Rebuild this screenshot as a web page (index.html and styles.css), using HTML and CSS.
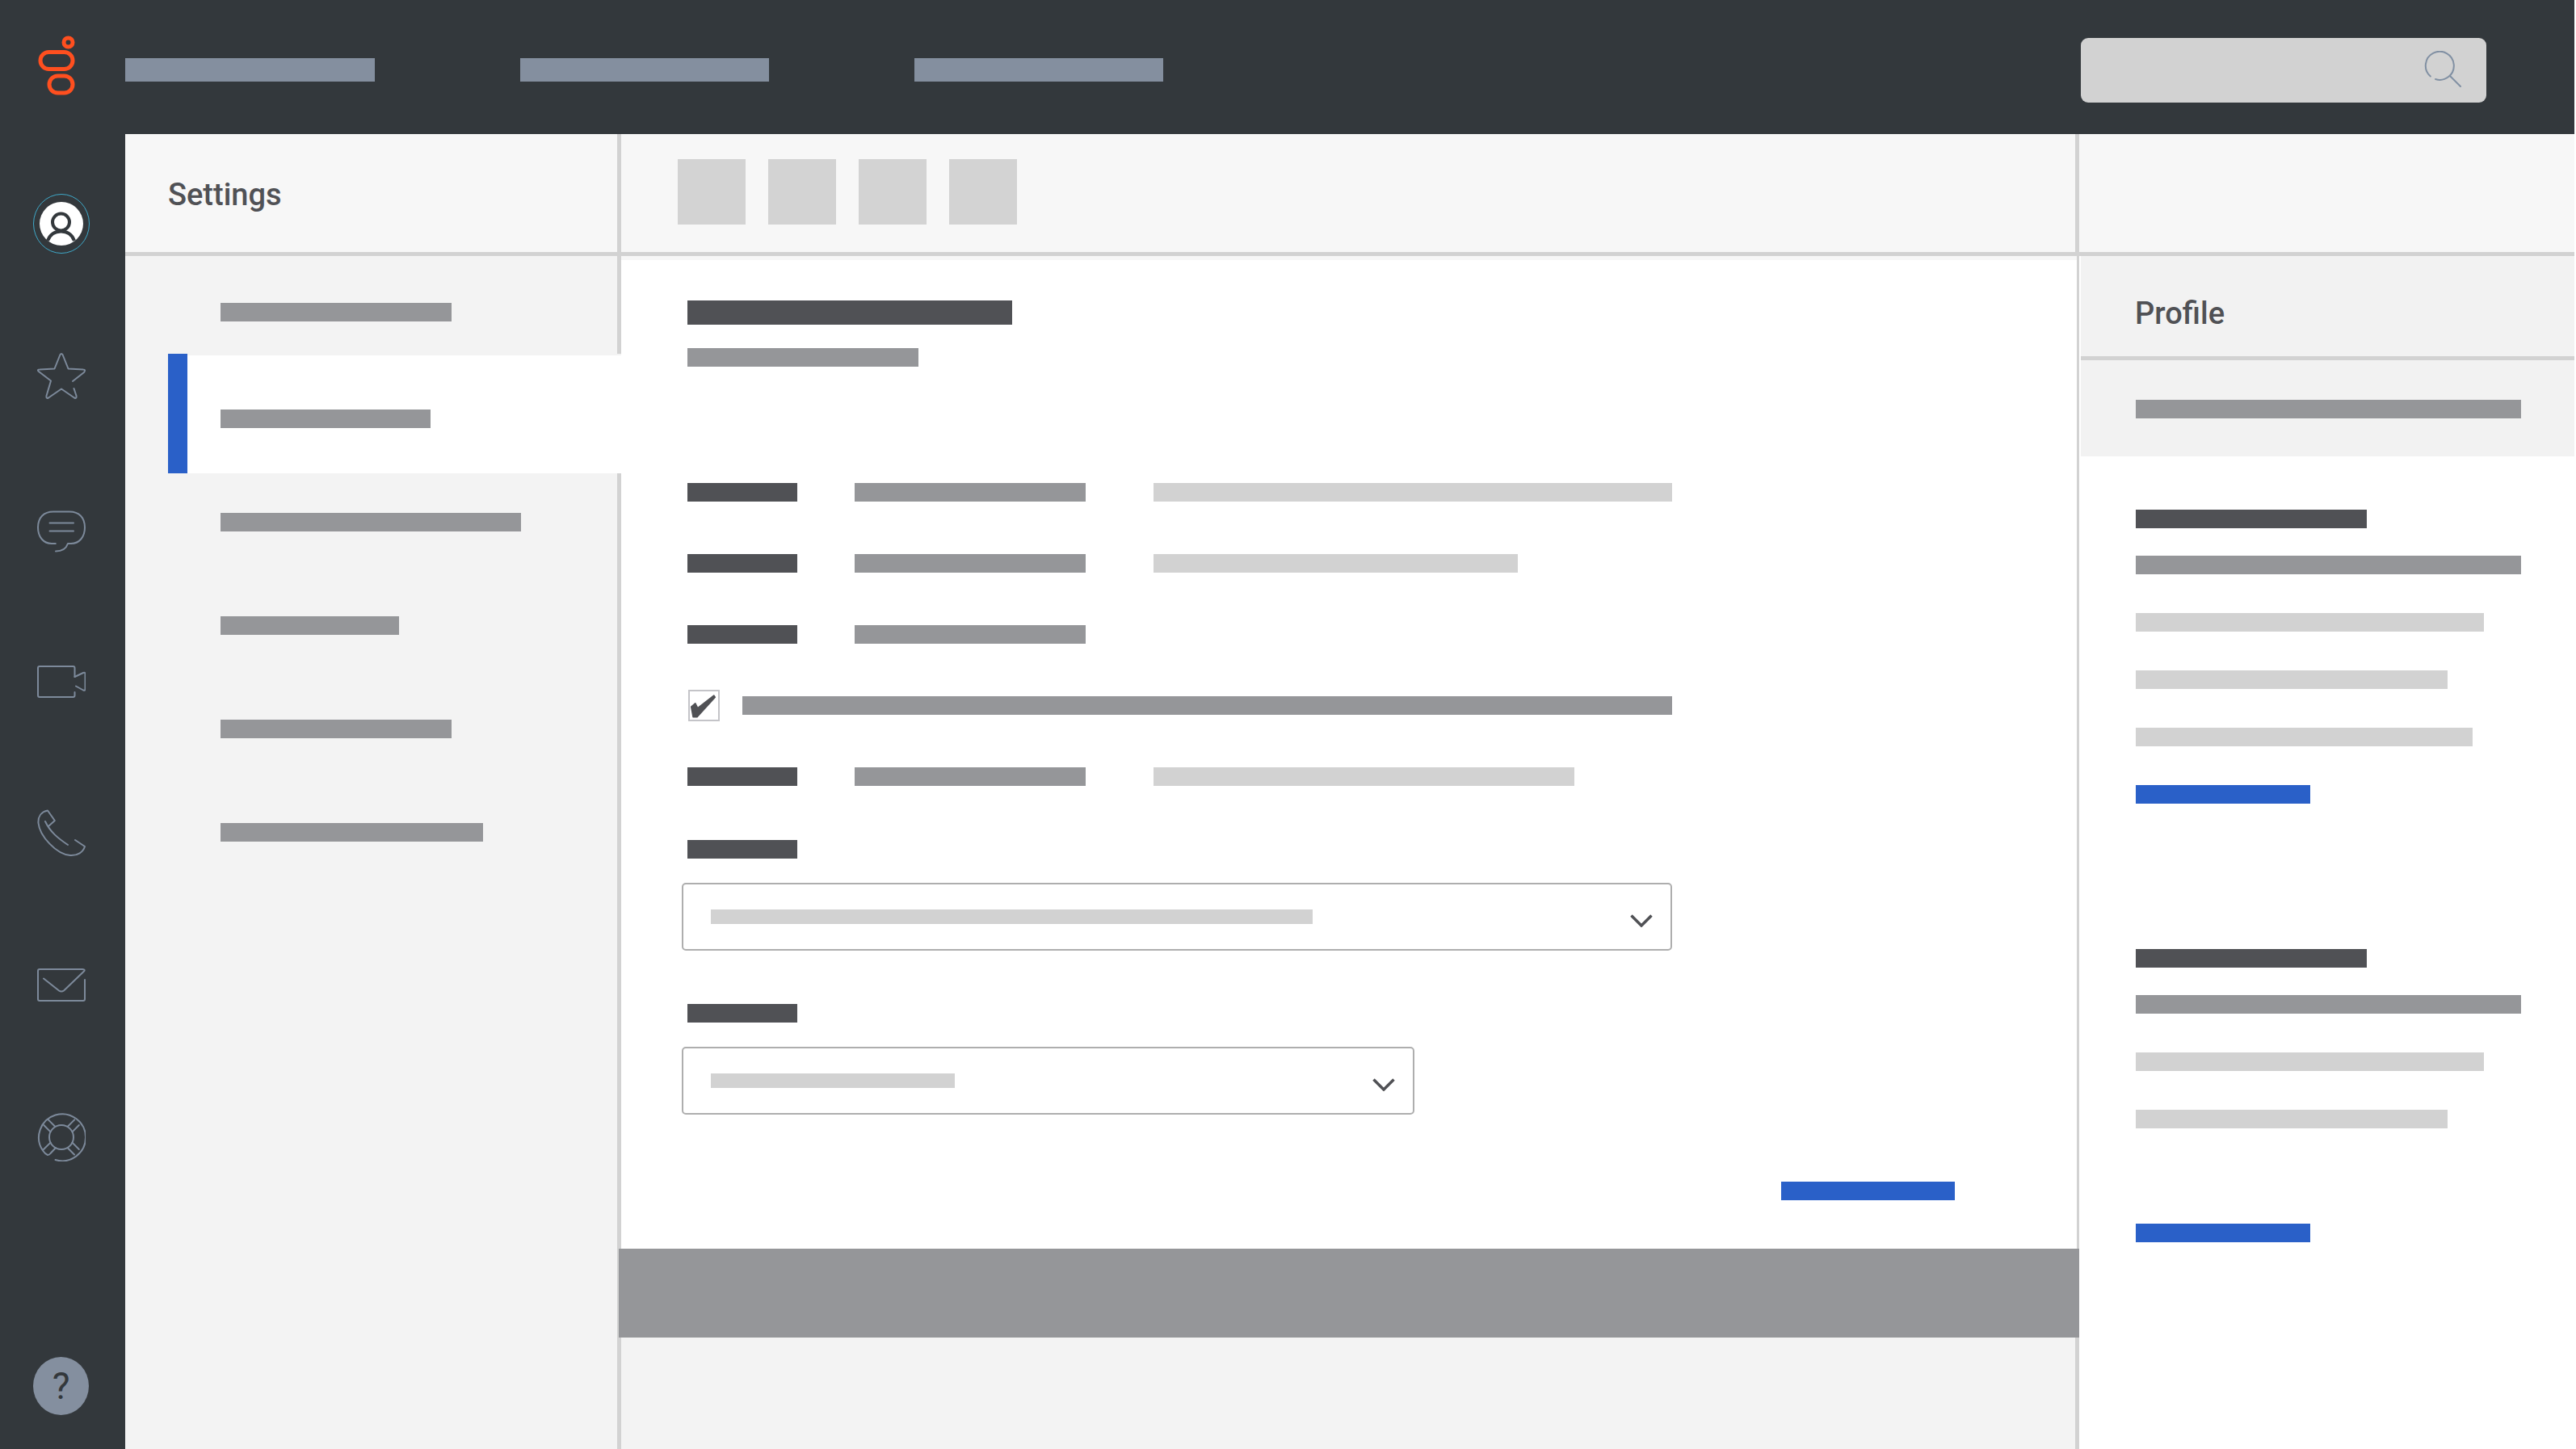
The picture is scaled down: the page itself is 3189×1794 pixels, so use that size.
FILE: index.html
```html
<!DOCTYPE html>
<html lang="en">
<head>
  <meta charset="UTF-8">
  <title>Settings - Profile</title>
  <link rel="stylesheet" href="styles.css">
</head>
<body>

<div class="app">

  <header class="topbar">
    <div class="logo">
      <svg width="46" height="74" viewBox="0 0 46 74" fill="none" stroke="#ff4f1f" stroke-width="5">
        <circle cx="37.5" cy="8.5" r="5.5"/>
        <rect x="3" y="20.5" width="40" height="21" rx="10.5"/>
        <rect x="14" y="50" width="29" height="21" rx="10.5"/>
      </svg>
    </div>
    <nav class="topnav">
      <div class="topnav-item"></div>
      <div class="topnav-item"></div>
      <div class="topnav-item"></div>
    </nav>
    <div class="search">
      <svg width="46" height="45" viewBox="0 0 46 45" fill="none" stroke="#8190a3" stroke-width="2" stroke-linecap="round">
        <path d="M14 35 A17.5 17.5 0 1 0 7.8 31.5"/>
        <path d="M32.5 31.5 L45 44"/>
      </svg>
    </div>
  </header>

  <div class="shell">

    <aside class="rail">
      <div class="rail-item">
        <svg width="70" height="74" viewBox="0 0 70 74">
          <ellipse cx="35" cy="37" rx="34.5" ry="36.5" fill="none" stroke="#3fa9c9" stroke-width="1"/>
          <ellipse cx="35" cy="37" rx="27" ry="27" fill="#fff"/>
          <circle cx="34.5" cy="35" r="10.5" fill="none" stroke="#33383c" stroke-width="4"/>
          <path d="M18 58 C21 50 27 46.5 34.5 46.5 C42 46.5 48 50 51 58" fill="none" stroke="#33383c" stroke-width="4"/>
        </svg>
      </div>
      <div class="rail-item">
        <svg class="rail-icon" width="60" height="60" viewBox="0 0 60 60">
          <path d="M44 36 L58 25 Q60.5 21.5 57 21.5 L38.5 20.5 L31.5 3 Q30 0.8 28.5 3 L21.5 20.5 L3 21.5 Q-0.5 21.5 2 24 L17 35.5 L11.5 54 Q11 58 14 56.5 L30 45.5 L46 56.5 Q49 58 48.5 54 L45.5 45"/>
        </svg>
      </div>
      <div class="rail-item">
        <svg class="rail-icon" width="60" height="60" viewBox="0 0 60 60">
          <path d="M22.8 49 H18 C8 49 1 41 1 29 C1 17 8 9.5 20 9.5 H40 C52 9.5 59 17 59 29 C59 41 52 49 42 49 H38 C36 55 31 58.5 23 58.5"/>
          <path d="M15.5 23.5 H45 M15.5 33.5 H45"/>
        </svg>
      </div>
      <div class="rail-item">
        <svg class="rail-icon" width="60" height="60" viewBox="0 0 60 60">
          <path d="M46.5 25 V14 Q46.5 12 44.5 12 H3 Q1 12 1 14 V48 Q1 50 3 50 H44.5 Q46.5 50 46.5 48 V44"/>
          <path d="M46.5 25 L57 20 Q59.5 19 59.5 21.5 V40 Q59.5 42.5 57 41.5 L48 36.5"/>
        </svg>
      </div>
      <div class="rail-item">
        <svg class="rail-icon" width="60" height="60" viewBox="0 0 60 60">
          <path d="M38 45 C26 37 16 29 10 16"/>
          <path d="M14 22 L21.8 15 L13 2.5 C5 4 1 10 1.5 18 C3 34 24 57 41 58 C50 58.5 57 54 59 47 L47 39"/>
        </svg>
      </div>
      <div class="rail-item">
        <svg class="rail-icon" width="60" height="60" viewBox="0 0 60 60">
          <path d="M59 23 V47 Q59 49 57 49 H3 Q1 49 1 47 V12 Q1 10 3 10 H56 Q60.5 10.5 57.5 13 L33 36.5 Q30 38.5 27 36.5 L8 21.5"/>
        </svg>
      </div>
      <div class="rail-item">
        <svg class="rail-icon" width="60" height="60" viewBox="0 0 60 60">
          <path d="M22.500 58 A29 29 0 1 0 7 46.500 Q10 51 13 52 Q15 52 16.500 50 L23 43"/>
          <circle cx="30" cy="30" r="15"/>
          <path d="M37.800 16.800 L46.200 8.400 M43.500 23.400 L51.800 15 M22.200 16.800 L13.800 8.400 M16.500 23.400 L8.200 15 M43.500 36.600 L51.800 45 M37.800 43.200 L46 51.500 M16.500 36.600 L7.500 45.500"/>
        </svg>
      </div>
      <div class="help">?</div>
    </aside>

    <div class="workspace">

      <div class="toolbar">
        <div class="settings-head"><h2>Settings</h2></div>
        <div class="tools">
          <div class="tool"></div>
          <div class="tool"></div>
          <div class="tool"></div>
          <div class="tool"></div>
        </div>
        <div class="toolbar-end"></div>
      </div>

      <div class="columns">

        <div class="side">
          <div class="nav-item"><div class="bar mid w286"></div></div>
          <div class="nav-item active"><div class="bar mid w260"></div></div>
          <div class="nav-item"><div class="bar mid w372"></div></div>
          <div class="nav-item"><div class="bar mid w221"></div></div>
          <div class="nav-item"><div class="bar mid w286"></div></div>
          <div class="nav-item"><div class="bar mid w325"></div></div>
        </div>

        <main class="main">
          <div class="form">
            <div class="bar dark form-title"></div>
            <div class="bar mid w286 form-sub"></div>

            <div class="rows">
              <div class="row">
                <div class="bar dark label"></div>
                <div class="bar mid value"></div>
                <div class="bar light w642"></div>
              </div>
              <div class="row">
                <div class="bar dark label"></div>
                <div class="bar mid value"></div>
                <div class="bar light w451"></div>
              </div>
              <div class="row">
                <div class="bar dark label"></div>
                <div class="bar mid value"></div>
              </div>
              <div class="row check-row">
                <div class="checkbox">
                  <svg width="36" height="36" viewBox="0 0 36 36">
                    <path d="M2.7 19 L7.7 14.7 L10.7 20.7 L30.7 5 L32.3 7.3 L10 31.7 L5 31.7 Z" fill="#505155" stroke="#505155" stroke-width="1.5" stroke-linejoin="round"/>
                  </svg>
                </div>
                <div class="bar mid check-text"></div>
              </div>
              <div class="row">
                <div class="bar dark label"></div>
                <div class="bar mid value"></div>
                <div class="bar light w521"></div>
              </div>
            </div>

            <div class="field">
              <div class="bar dark label"></div>
              <div class="select select-wide">
                <div class="bar light w745"></div>
                <svg class="chevron" width="28" height="16" viewBox="0 0 28 16"><path d="M1.5 1.5 L14 14 L26.500 1.500"/></svg>
              </div>
            </div>

            <div class="field field-next">
              <div class="bar dark label"></div>
              <div class="select select-narrow">
                <div class="bar light w302"></div>
                <svg class="chevron" width="28" height="16" viewBox="0 0 28 16"><path d="M1.5 1.5 L14 14 L26.500 1.500"/></svg>
              </div>
            </div>

            <div class="bar blue form-link"></div>
          </div>
          <div class="band"></div>
          <div class="main-foot"></div>
        </main>

        <aside class="profile">
          <div class="profile-head"><h2>Profile</h2></div>
          <div class="profile-strip"><div class="bar mid w477"></div></div>

          <section class="profile-section">
            <div class="profile-title">
              <div class="bar dark w286"></div>
              <div class="bar mid w477"></div>
            </div>
            <div class="bar light w431"></div>
            <div class="bar light w386"></div>
            <div class="bar light w417"></div>
            <div class="bar blue w216"></div>
          </section>

          <section class="profile-section second">
            <div class="profile-title">
              <div class="bar dark w286"></div>
              <div class="bar mid w477"></div>
            </div>
            <div class="bar light w431"></div>
            <div class="bar light w386"></div>
            <div class="bar blue w216 profile-link"></div>
          </section>
        </aside>

      </div>
    </div>
  </div>
</div>

</body>
</html>
```
FILE: styles.css
```css
* {
  box-sizing: border-box;
}

html,
body {
  margin: 0;
  background: #fff;
}

body {
  font-family: Roboto, "Liberation Sans", sans-serif;
  overflow: hidden;
}

h2 {
  margin: 0;
  font-size: 38px;
  font-weight: 500;
  color: #505155;
}

.app {
  width: 3187px;
  height: 1794px;
  display: flex;
  flex-direction: column;
}

/* top bar */

.topbar {
  height: 166px;
  flex: none;
  display: flex;
  background: #33383c;
}

.logo {
  width: 155px;
  padding: 44px 0 0 47px;
}

.topnav {
  display: flex;
  gap: 180px;
  padding-top: 72px;
}

.topnav-item {
  width: 308px;
  height: 29px;
  background: #848f9f;
}

.topnav-item:first-child {
  width: 309px;
}

.search {
  width: 502px;
  height: 80px;
  margin: 47px 109px 0 auto;
  padding: 16px 31px 0 0;
  display: flex;
  justify-content: flex-end;
  align-items: flex-start;
  background: #d2d2d2;
  border-radius: 9px;
}

/* icon rail */

.shell {
  flex: 1;
  display: flex;
  min-height: 0;
}

.rail {
  width: 155px;
  flex: none;
  display: flex;
  flex-direction: column;
  align-items: center;
  padding: 17px 4px 0 0;
  background: #33383c;
}

.rail-item {
  height: 188.5px;
  flex: none;
  display: flex;
  align-items: center;
  justify-content: center;
}

.rail-icon {
  fill: none;
  stroke: #7d8a9b;
  stroke-width: 2;
  stroke-linecap: round;
  stroke-linejoin: round;
}

.help {
  width: 69px;
  height: 72px;
  margin: auto 0 42px;
  display: flex;
  align-items: center;
  justify-content: center;
  border-radius: 50%;
  background: #848f9f;
  color: #33383c;
  font-size: 46px;
  font-weight: 400;
}

/* toolbar row */

.workspace {
  flex: 1;
  display: flex;
  flex-direction: column;
  min-width: 0;
}

.toolbar {
  height: 151px;
  flex: none;
  display: flex;
  background: #f7f7f7;
  border-bottom: 5px solid #d2d2d2;
}

.settings-head {
  width: 614px;
  padding: 3px 0 0 53px;
  display: flex;
  align-items: center;
  border-right: 5px solid #d2d2d2;
}

.tools {
  width: 1800px;
  padding: 31px 0 0 70px;
  display: flex;
  gap: 28px;
}

.tool {
  width: 84px;
  height: 81px;
  background: #d3d3d3;
}

.toolbar-end {
  flex: 1;
  border-left: 5px solid #d2d2d2;
}

/* columns */

.columns {
  flex: 1;
  display: flex;
  min-height: 0;
}

.bar {
  height: 23px;
  flex: none;
}

.dark {
  background: #505155;
}

.mid {
  background: #959699;
}

.light {
  background: #d2d2d2;
}

.blue {
  background: #2a60c8;
}

.w216 { width: 216px; }
.w221 { width: 221px; }
.w260 { width: 260px; }
.w286 { width: 286px; }
.w302 { width: 302px; }
.w325 { width: 325px; }
.w372 { width: 372px; }
.w386 { width: 386px; }
.w417 { width: 417px; }
.w431 { width: 431px; }
.w451 { width: 451px; }
.w477 { width: 477px; }
.w521 { width: 521px; }
.w642 { width: 642px; }
.w745 { width: 745px; }

/* settings list */

.side {
  width: 614px;
  flex: none;
  padding: 58px 0 0 53px;
  background: #f3f3f3;
  border-right: 5px solid #d2d2d2;
}

.nav-item {
  margin-top: 105px;
  padding-left: 65px;
}

.nav-item:first-child {
  margin-top: 0;
}

.nav-item.active {
  height: 148px;
  margin: 40px -5px 0 0;
  padding: 69px 0 0 41px;
  border-left: 24px solid #2a60c8;
  background: linear-gradient(#f3f3f3 2px, #fff 2px);
}

.nav-item.active + .nav-item {
  margin-top: 49px;
}

/* main form */

.main {
  width: 1802px;
  flex: none;
  display: flex;
  flex-direction: column;
}

.form {
  height: 1229px;
  flex: none;
  padding: 50px 0 0 82px;
  background: #fff;
  border-top: 5px solid #f7f7f7;
}

.form-title {
  width: 402px;
  height: 30px;
}

.form-sub {
  margin-top: 29px;
}

.rows {
  margin-top: 144px;
  display: flex;
  flex-direction: column;
  gap: 65px;
}

.row {
  height: 23px;
  display: flex;
  align-items: center;
}

.label {
  width: 136px;
}

.value {
  width: 286px;
  margin: 0 84px 0 71px;
}

.checkbox {
  width: 39px;
  height: 39px;
  flex: none;
  background: #fff;
  border: 2px solid #c4c4c8;
  margin-right: 28px;
  margin-left: 1px;
}

.checkbox svg {
  display: block;
  margin: 0 0 0 -1px;
}

.check-text {
  width: 1151px;
}

.field {
  margin-top: 67px;
}

.field-next {
  margin-top: 66px;
}

.select {
  height: 84px;
  margin: 30px 0 0 -7px;
  padding: 0 22px 0 34px;
  display: flex;
  align-items: center;
  justify-content: space-between;
  background: #fff;
  border: 2px solid #aeaeae;
  border-radius: 5px;
}

.select .bar {
  height: 18px;
}

.select-wide {
  width: 1226px;
}

.select-narrow {
  width: 907px;
}

.chevron {
  margin-top: 9px;
  fill: none;
  stroke: #505155;
  stroke-width: 3.5;
}

.form-link {
  width: 215px;
  margin: 83px 0 0 1354px;
}

/* the band sits over both column dividers */
.band {
  position: relative;
  height: 110px;
  flex: none;
  margin: 0 -3px 0 -3px;
  background: #959699;
}

.main-foot {
  flex: 1;
  background: #f3f3f3;
  border-right: 2px solid #d2d2d2;
}

/* profile panel */

.profile {
  flex: 1;
  border-left: 3px solid #d2d2d2;
}

.profile-head {
  height: 129px;
  margin-left: 2px;
  padding: 17px 0 0 67px;
  display: flex;
  align-items: center;
  background: #f2f2f2;
  border-bottom: 5px solid #d2d2d2;
}

.profile-strip {
  height: 119px;
  margin-left: 2px;
  padding: 49px 0 0 68px;
  background: #f2f2f2;
}

.profile-section {
  padding: 66px 0 0 70px;
  display: flex;
  flex-direction: column;
  gap: 48px;
}

.profile-section.second {
  padding-top: 180px;
}

.profile-title {
  display: flex;
  flex-direction: column;
  gap: 34px;
}

.profile-link {
  margin-top: 70px;
}
```
